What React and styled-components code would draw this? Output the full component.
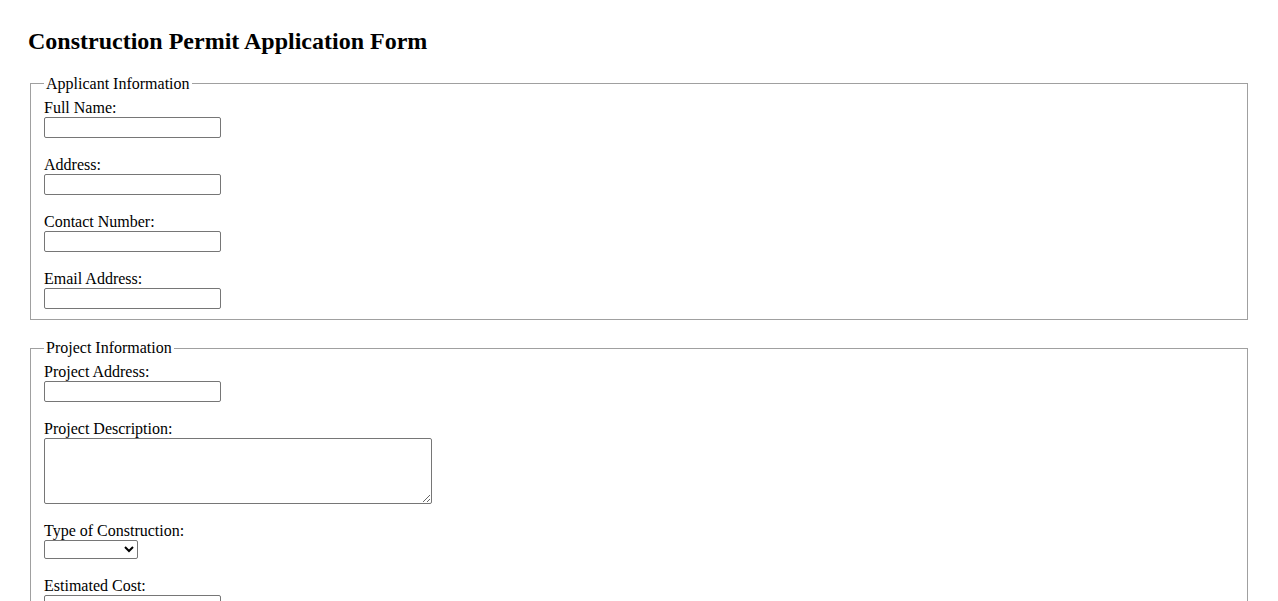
import styled, { createGlobalStyle } from "styled-components";

const GlobalStyle = createGlobalStyle`
  body {
    margin: 0;
    background: #ffffff;
    color: #000000;
    font-family: "Liberation Serif", "Times New Roman", serif;
    font-size: 16px;
    line-height: 18.4px;
  }
`;

const Page = styled.main`
  padding: 28px 28px 40px;
`;

const Title = styled.h2`
  margin: 0 0 19px;
  font-size: 24px;
  line-height: 27.6px;
  font-weight: bold;
`;

const Section = styled.fieldset`
  margin: 0 2px 19px;
  padding: 5.6px 13px 10px;
  border: 1px solid #a0a0a0;
`;

const Legend = styled.legend`
  padding: 0 2px;
`;

const Field = styled.div`
  margin-bottom: 17.6px;
  &:last-child {
    margin-bottom: 0;
  }
`;

const Label = styled.label`
  display: block;
`;

const TextInput = styled.input`
  display: block;
  box-sizing: border-box;
  width: 177px;
  height: 21px;
  margin: 0;
  padding: 1px 2px;
  border: 1px solid #767676;
  border-radius: 2px;
`;

const TextArea = styled.textarea`
  display: block;
  box-sizing: border-box;
  width: 388px;
  height: 66px;
  margin: 0;
  border: 1px solid #767676;
  border-radius: 2px;
`;

const Select = styled.select`
  display: block;
  box-sizing: border-box;
  width: 94px;
  height: 19px;
  margin: 0;
  border: 1px solid #767676;
  border-radius: 2px;
  background: #ffffff;
`;

const SubmitButton = styled.button`
  font-size: 13px;
`;

const applicant = [
  { id: "fullName", label: "Full Name:" },
  { id: "address", label: "Address:" },
  { id: "contact", label: "Contact Number:", type: "tel" },
  { id: "email", label: "Email Address:", type: "email" },
];

export default function App() {
  return (
    <Page>
      <GlobalStyle />
      <Title>Construction Permit Application Form</Title>
      <form onSubmit={(e) => e.preventDefault()}>
        <Section>
          <Legend>Applicant Information</Legend>
          {applicant.map((f) => (
            <Field key={f.id}>
              <Label htmlFor={f.id}>{f.label}</Label>
              <TextInput id={f.id} type={f.type || "text"} />
            </Field>
          ))}
        </Section>

        <Section>
          <Legend>Project Information</Legend>
          <Field>
            <Label htmlFor="projectAddress">Project Address:</Label>
            <TextInput id="projectAddress" type="text" />
          </Field>
          <Field>
            <Label htmlFor="description">Project Description:</Label>
            <TextArea id="description" />
          </Field>
          <Field>
            <Label htmlFor="type">Type of Construction:</Label>
            <Select id="type" defaultValue="">
              <option value=""></option>
              <option value="new">New</option>
              <option value="renovation">Renovation</option>
              <option value="addition">Addition</option>
            </Select>
          </Field>
          <Field>
            <Label htmlFor="cost">Estimated Cost:</Label>
            <TextInput id="cost" type="text" />
          </Field>
        </Section>

        <SubmitButton type="submit">Submit Application</SubmitButton>
      </form>
    </Page>
  );
}
